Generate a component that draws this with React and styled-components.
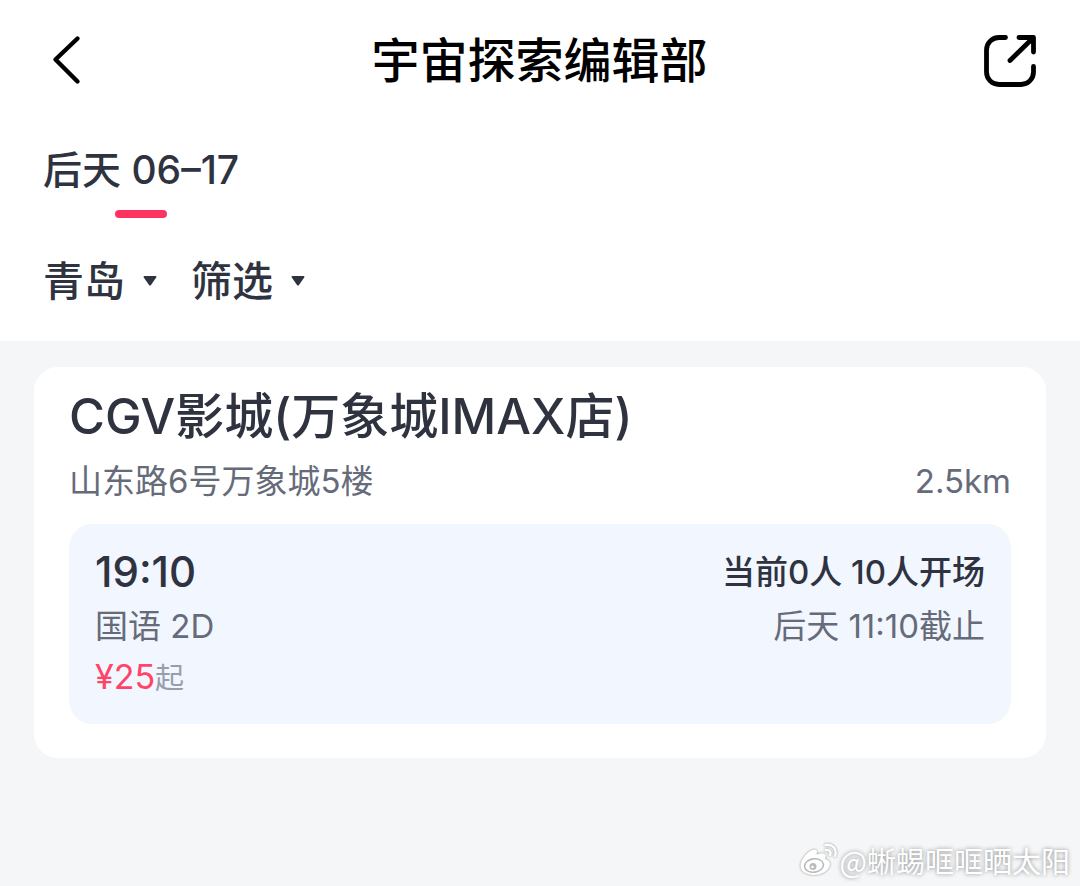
import React from 'react';
import styled, { createGlobalStyle } from 'styled-components';

const GlobalStyle = createGlobalStyle`
  body {
    margin: 0;
    background: #f4f6f8;
    color: #2e333f;
    font-family: Inter, 'Noto Sans CJK SC', sans-serif;
  }

  button,
  select {
    appearance: none;
    margin: 0;
    padding: 0;
    border: 0;
    background: none;
    color: inherit;
    font: inherit;
  }
`;

const Page = styled.div`
  position: relative;
  box-sizing: border-box;
  min-height: 100vh;
`;

const Top = styled.header`
  padding: 0 44px 36px 43px;
  background: #fff;
`;

const TitleBar = styled.div`
  display: grid;
  grid-template-columns: 54px 1fr 54px;
  align-items: center;
  height: 122px;
  color: #000;
`;

const Title = styled.h1`
  margin: 0;
  font-size: 48px;
  line-height: 60px;
  font-weight: 500;
  text-align: center;
`;

const IconButton = styled.button`
  display: flex;
  justify-content: ${props => (props.$end ? 'flex-end' : 'flex-start')};
  padding: ${props => (props.$end ? '0' : '0 8px')};
  cursor: pointer;

  svg {
    display: block;
    flex: none;
    fill: none;
    stroke: currentColor;
    stroke-linecap: round;
    stroke-linejoin: round;
  }
`;

const DateTabs = styled.nav`
  display: flex;
  padding-top: 24px;
`;

const DateTab = styled.button`
  display: flex;
  flex-direction: column;
  align-items: center;
  gap: 16px;
  font-size: 39px;
  line-height: 48px;
  font-weight: 500;

  &::after {
    content: '';
    width: 52px;
    height: 8px;
    border-radius: 4px;
    background: #ff3360;
  }
`;

const Filters = styled.div`
  display: flex;
  gap: 34px;
  padding-top: 39px;
`;

const Filter = styled.label`
  display: flex;
  align-items: center;
  gap: 18px;

  select {
    height: 48px;
    font-size: 41px;
    line-height: 48px;
    font-weight: 500;
  }

  svg {
    fill: currentColor;
  }
`;

const List = styled.main`
  padding: 26px 34px;
`;

const Card = styled.article`
  padding: 20px 35px 34px;
  border-radius: 24px;
  background: #fff;
`;

const CinemaName = styled.h2`
  margin: 0 0 12px;
  font-size: 49px;
  line-height: 60px;
  font-weight: 500;
`;

const Row = styled.div`
  display: flex;
  justify-content: space-between;
`;

const Muted = styled.span`
  color: #666b7a;
  font-size: 33px;
  line-height: ${props => (props.$tall ? 52 : 45)}px;
`;

const Session = styled.section`
  margin-top: 20px;
  padding: 20px 26px;
  border-radius: 24px;
  background: #f1f6ff;
`;

const Time = styled.time`
  font-size: 42px;
  line-height: 56px;
  font-weight: 500;
`;

const Status = styled.strong`
  font-size: 33px;
  line-height: 56px;
  font-weight: 500;
`;

const Price = styled.div`
  display: flex;
  align-items: baseline;
  height: 52px;
  color: #ff4468;
  font-size: 34px;
  line-height: 50px;

  small {
    color: #989dab;
    font-size: 29px;
  }
`;

const Watermark = styled.div`
  position: absolute;
  right: 10px;
  bottom: 6px;
  display: flex;
  align-items: center;
  gap: 2px;
  color: #fff;
  font-family: 'Noto Sans CJK SC', sans-serif;
  font-size: 29px;
  line-height: 40px;
  text-shadow: 0 0 4px #888;

  svg {
    filter: drop-shadow(0 0 1px #888);
  }
`;

const Caret = () => (
  <svg width="14" height="10" viewBox="0 0 14 10" aria-hidden="true">
    <path d="M1.5 0h11q1.5 0 .7 1.4L8 9q-1 1.2-2 0L.8 1.4Q0 0 1.5 0z" />
  </svg>
);

const WeiboLogo = () => (
  <svg width="40" height="36" viewBox="0 0 40 36" fill="none" aria-hidden="true">
    <path
      fill="#fff"
      d="M13 8.500c3-1.700 6-1.500 6 1.500l-.4 2.500c4-1.800 9.400-2.300 9.200 1.500l-.6 3c3.600 1 5.300 3.200 4.600 6.300C30.600 28.800 24 33 16 33 8.500 33 2.500 29.500 2.500 24c0-5.500 5-12.300 10.500-15.500z"
    />
    <ellipse cx="16" cy="23.500" rx="9.500" ry="6.700" stroke="#bbb" strokeWidth="1.600" transform="rotate(-8 16 23.500)" />
    <circle cx="15" cy="24.500" r="3.500" fill="#bbb" />
    <circle cx="14.500" cy="25" r="1.300" fill="#fff" />
    <g stroke="#fff" strokeWidth="2.400" strokeLinecap="round">
      <path d="M27.500 3C34 1.500 39.500 7 37 14" />
      <path d="M27.800 8c3.200-.6 5.400 1.800 4.400 5" />
    </g>
  </svg>
);

const FilterSelect = ({ label, value }) => (
  <Filter>
    <select aria-label={label} defaultValue={value}>
      <option>{value}</option>
    </select>
    <Caret />
  </Filter>
);

const sessions = [
  {
    time: '19:10',
    format: '国语 2D',
    price: 25,
    status: '当前0人 10人开场',
    deadline: '后天 11:10截止',
  },
];

const App = () => (
  <Page>
    <GlobalStyle />
    <Top>
      <TitleBar>
        <IconButton type="button" aria-label="返回">
          <svg width="32" height="52" viewBox="0 0 32 52" strokeWidth="4.4">
            <path d="M26.5 3.5l-22 21 22 22" />
          </svg>
        </IconButton>
        <Title>宇宙探索编辑部</Title>
        <IconButton type="button" aria-label="分享" $end>
          <svg width="52" height="52" viewBox="0 0 52 52" strokeWidth="4.8">
            <path d="M21.5 2.5H15A12.5 12.5 0 0 0 2.5 15v22A12.5 12.5 0 0 0 15 49.5h22A12.5 12.5 0 0 0 49.5 37v-5.5" />
            <path d="M35 2.5h14.5V17M26 25.5l22.5-22" />
          </svg>
        </IconButton>
      </TitleBar>
      <DateTabs>
        <DateTab type="button">后天 06–17</DateTab>
      </DateTabs>
      <Filters>
        <FilterSelect label="城市" value="青岛" />
        <FilterSelect label="筛选" value="筛选" />
      </Filters>
    </Top>
    <List>
      <Card>
        <CinemaName>CGV影城(万象城IMAX店)</CinemaName>
        <Row>
          <Muted>山东路6号万象城5楼</Muted>
          <Muted>2.5km</Muted>
        </Row>
        {sessions.map(session => (
          <Session key={session.time}>
            <Row>
              <Time>{session.time}</Time>
              <Status>{session.status}</Status>
            </Row>
            <Row>
              <Muted $tall>{session.format}</Muted>
              <Muted $tall>{session.deadline}</Muted>
            </Row>
            <Price>
              <span>¥{session.price}</span>
              <small>起</small>
            </Price>
          </Session>
        ))}
      </Card>
    </List>
    <Watermark>
      <WeiboLogo />
      <span>@蜥蜴哐哐晒太阳</span>
    </Watermark>
  </Page>
);

export default App;
